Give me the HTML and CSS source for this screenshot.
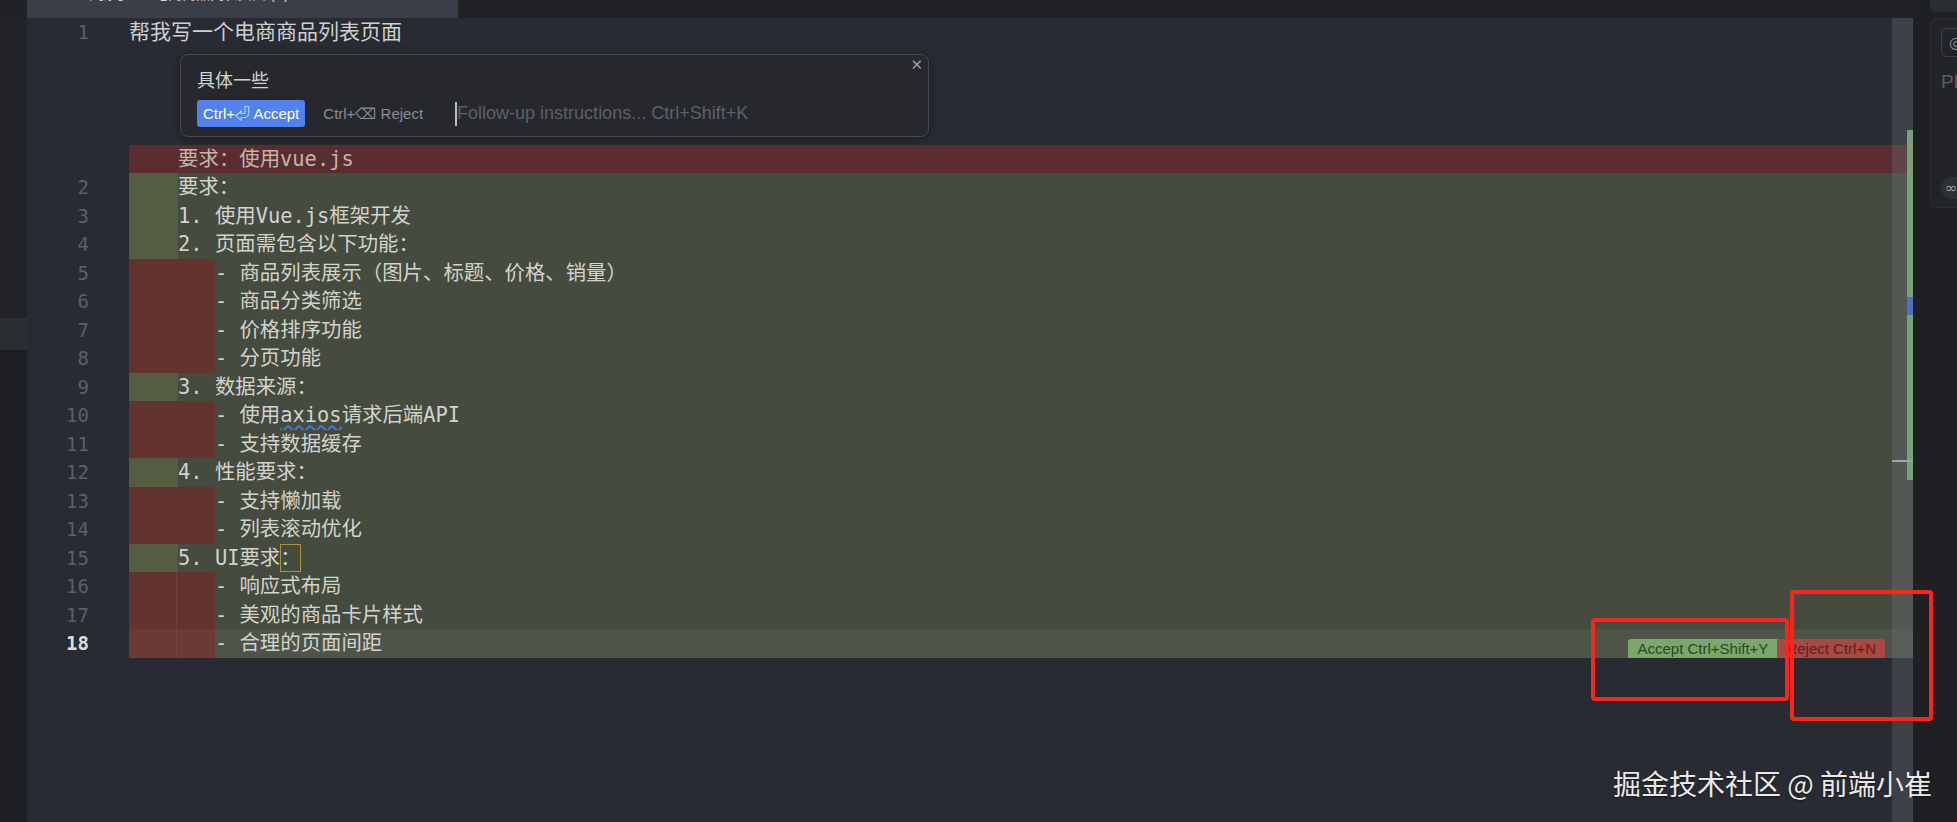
FILE: index.html
```html
<!DOCTYPE html>
<html lang="zh-CN">
<head>
<meta charset="utf-8">
<title>Editor</title>
<link rel="stylesheet" href="styles.css">
</head>
<body>
<div class="app">
  <div class="workbench">
    <div class="tabbar">
      <div class="tab-spacer"></div>
      <div class="tab"><span class="tab-label">⚙  ●  帮我写一个电商商品列表页面 (K)</span></div>
    </div>
    <div class="main">
      <div class="sidebar">
        <div class="sb-top"></div>
        <div class="sb-band"></div>
        <div class="sb-rest"></div>
      </div>
      <div class="editor">
        <div class="row"><div class="ln">1</div><div class="code plain">帮我写一个电商商品列表页面</div></div>
        <div class="zone">
          <div class="cmdk">
            <span class="cmdk-close">✕</span>
            <div class="cmdk-prompt">具体一些</div>
            <div class="cmdk-actions">
              <span class="btn-accept">Ctrl+⏎ Accept</span>
              <span class="btn-reject">Ctrl+⌫ Reject</span>
              <span class="caret"></span>
              <span class="placeholder">Follow-up instructions... Ctrl+Shift+K</span>
            </div>
          </div>
        </div>
        <div class="row"><div class="ln"></div><div class="code del">    要求：使用vue.js</div></div>
        <div class="row"><div class="ln">2</div><div class="code ins"><span class="ind4"></span>要求：</div></div>
        <div class="row"><div class="ln">3</div><div class="code ins"><span class="ind4"></span>1. 使用Vue.js框架开发</div></div>
        <div class="row"><div class="ln">4</div><div class="code ins"><span class="ind4"></span>2. 页面需包含以下功能：</div></div>
        <div class="row"><div class="ln">5</div><div class="code ins"><span class="ind7"></span>- 商品列表展示（图片、标题、价格、销量）</div></div>
        <div class="row"><div class="ln">6</div><div class="code ins"><span class="ind7"></span>- 商品分类筛选</div></div>
        <div class="row"><div class="ln">7</div><div class="code ins"><span class="ind7"></span>- 价格排序功能</div></div>
        <div class="row"><div class="ln">8</div><div class="code ins"><span class="ind7"></span>- 分页功能</div></div>
        <div class="row"><div class="ln">9</div><div class="code ins"><span class="ind4"></span>3. 数据来源：</div></div>
        <div class="row"><div class="ln">10</div><div class="code ins"><span class="ind7"></span>- 使用<span class="squiggle">axios</span>请求后端API</div></div>
        <div class="row"><div class="ln">11</div><div class="code ins"><span class="ind7"></span>- 支持数据缓存</div></div>
        <div class="row"><div class="ln">12</div><div class="code ins"><span class="ind4"></span>4. 性能要求：</div></div>
        <div class="row"><div class="ln">13</div><div class="code ins"><span class="ind7"></span>- 支持懒加载</div></div>
        <div class="row"><div class="ln">14</div><div class="code ins"><span class="ind7"></span>- 列表滚动优化</div></div>
        <div class="row"><div class="ln">15</div><div class="code ins"><span class="ind4"></span>5. UI要求<span class="match">：</span></div></div>
        <div class="row"><div class="ln">16</div><div class="code ins"><span class="ind7 guide"></span>- 响应式布局</div></div>
        <div class="row"><div class="ln">17</div><div class="code ins"><span class="ind7 guide"></span>- 美观的商品卡片样式</div></div>
        <div class="row active"><div class="ln">18</div><div class="code ins"><span class="ind7 guide"></span>- 合理的页面间距<span class="inline-actions"><span class="ia-accept">Accept Ctrl+Shift+Y</span><span class="ia-reject">Reject Ctrl+N</span></span></div></div>

        <div class="scrollbar">
          <span class="mk-green"></span>
          <span class="mk-blue"></span>
          <span class="mk-line"></span>
        </div>
      </div>
    </div>
  </div>
  <div class="rightpanel">
    <div class="rp-top"></div>
    <div class="rp-card">
      <div class="rp-icon">◎</div>
      <div class="rp-text">Plan, search, build anything</div>
      <div class="rp-link">∞</div>
    </div>
  </div>
</div>
<div class="annot a1"></div>
<div class="annot a2"></div>
<div class="watermark">掘金技术社区 @ 前端小崔</div>
</body>
</html>
```

FILE: styles.css
```css
* { box-sizing: border-box; margin: 0; padding: 0; }
html, body { width: 1957px; height: 822px; overflow: hidden; }
body {
  background: #282b31;
  font-family: "Noto Sans", "Noto Sans CJK SC", sans-serif;
  position: relative;
}
.app { display: flex; height: 822px; }
.workbench { width: 1913px; display: flex; flex-direction: column; flex: none; }

.tabbar { height: 18px; display: flex; background: #1f2125; flex: none; }
.tab-spacer { width: 27px; flex: none; }
.tab {
  width: 431px; background: #3a3e48; overflow: hidden;
  display: flex; align-items: flex-end; padding-left: 20px;
}
.tab-label {
  font-family: "Liberation Sans", "Noto Sans CJK SC", sans-serif;
  font-size: 14px; line-height: 18px; margin-bottom: 15px;
  color: #d8d8d8; white-space: pre;
}

.main { flex: 1; display: flex; min-height: 0; }
.sidebar { width: 27px; display: flex; flex-direction: column; flex: none; }
.sb-top { height: 300px; background: #212328; }
.sb-band { height: 32px; background: #2a2d32; }
.sb-rest { flex: 1; background: #1c1e22; }

.editor {
  flex: 1; position: relative; background: #282b31; overflow: hidden;
  font-family: "DejaVu Sans Mono", "Noto Sans CJK SC", monospace;
  font-size: 20.4px; color: #d2d3cc;
}
.row { display: flex; height: 28.5px; line-height: 28.5px; }
.ln { width: 62px; flex: none; text-align: right; color: #59606b; font-size: 19px; }
.code { margin-left: 40px; flex: 1; display: flex; white-space: pre; }
.plain { color: #cfd0d2; font-size: 21px; }
.ins { background: #454b3f; }
.del { background: #5a2e31; color: #c4b3b0; }
.ind4 { width: 4ch; flex: none; background: #555d41; }
.ind7 { width: 7ch; flex: none; background: #63342f; }
.ind7.guide {
  background-image: linear-gradient(90deg, transparent calc(4ch - 2px), rgba(255,255,255,0.07) calc(4ch - 2px), rgba(255,255,255,0.07) calc(4ch - 1px), transparent calc(4ch - 1px));
}
.active .ln { color: #dcdcdc; font-weight: bold; }
.active .code { background: #4f5449; }
.active .ind7 { background-color: #6b3a35; }

.squiggle {
  text-decoration: underline wavy #3b7de8;
  text-decoration-thickness: 1.5px;
  text-underline-offset: 3px;
}
.match { box-shadow: inset 0 0 0 1px #a8953a; }

.inline-actions {
  margin-left: auto; margin-right: 28px; align-self: flex-end;
  display: flex; height: 19px;
  font-family: "Liberation Sans", Arial, sans-serif; font-size: 15px; line-height: 19px;
}
.ia-accept { background: #7ba66c; color: #2a4626; padding: 0 9px; border-radius: 3px 0 0 0; }
.ia-reject { background: #a84944; color: #5e201d; padding: 0 9px; border-radius: 0 3px 0 0; }

.zone { height: 98px; padding: 7.5px 0 0 153px; }
.cmdk {
  position: relative; width: 749px; height: 83px;
  background: #26282d; border: 1px solid #474a51; border-radius: 8px;
  padding: 12px 0 0 16px;
  font-family: "Liberation Sans", "Noto Sans CJK SC", sans-serif;
  box-shadow: 0 2px 8px rgba(0,0,0,0.35);
}
.cmdk-close {
  position: absolute; top: 1px; right: 5px;
  font-family: "DejaVu Sans", sans-serif; font-size: 15px; color: #9b9ea4; line-height: 18px;
}
.cmdk-prompt { font-size: 18px; line-height: 24px; color: #d2d2d2; font-family: "Noto Sans CJK SC", sans-serif; }
.cmdk-actions { margin-top: 9px; display: flex; align-items: center; height: 27px; font-size: 15px; white-space: pre; }
.btn-accept { background: #5181ef; color: #ffffff; height: 27px; line-height: 27px; padding: 0 6px; border-radius: 3px; }
.btn-reject { margin-left: 18px; color: #8a8d93; }
.caret { margin-left: 32px; width: 2px; height: 24px; background: #bdbdbd; }
.placeholder { color: #5c6068; font-size: 18px; }

.scrollbar {
  position: absolute; right: 0; top: 0; bottom: 0; width: 21px;
  background: rgba(112, 118, 128, 0.3);
}
.mk-green { position: absolute; right: 0; top: 112px; width: 6px; height: 350px; background: #7a9f7b; }
.mk-blue { position: absolute; right: 0; top: 279px; width: 6px; height: 18px; background: #4b72c2; }
.mk-line { position: absolute; left: 0; right: 0; top: 442px; height: 2px; background: #a0a6ad; }

.rightpanel {
  width: 44px; flex: none; background: #1e2024; overflow: hidden;
  display: flex; flex-direction: column; padding-left: 17px;
}
.rp-top { height: 12px; flex: none; width: 60px; background: #2a2d33; border-radius: 0 0 0 6px; }
.rp-card {
  margin-top: 6px; height: 190px; width: 60px; flex: none;
  background: #222429; border: 1px solid #2b2e34; border-right: none;
  border-radius: 8px 0 0 8px; padding: 9px 0 0 10px;
  display: flex; flex-direction: column;
}
.rp-icon {
  width: 30px; height: 29px; flex: none;
  border: 1px solid #3b3e45; border-radius: 6px;
  color: #8a8d93; font-size: 16px; line-height: 27px; text-align: center;
  font-family: "DejaVu Sans", sans-serif;
}
.rp-text {
  margin-top: 14px; font-size: 19px; line-height: 22px; color: #5b5f66; white-space: nowrap;
  font-family: "Liberation Sans", sans-serif;
}
.rp-link {
  margin-top: auto; margin-bottom: 8px; height: 22px; width: 40px;
  background: #2c2f34; border-radius: 11px 0 0 11px;
  color: #9a9da3; font-size: 15px; line-height: 22px; padding-left: 4px;
  font-family: "DejaVu Sans", sans-serif;
}

.annot { position: absolute; border: 4px solid #ff2419; border-radius: 4px; }
.a1 { left: 1591px; top: 618px; width: 198px; height: 83px; }
.a2 { left: 1790px; top: 590px; width: 143px; height: 131px; }
.watermark {
  position: absolute; right: 25px; top: 766px;
  font-family: "Noto Sans CJK SC", sans-serif; font-size: 28px; line-height: 34px;
  color: #e9e9e9; text-shadow: 0 1px 2px rgba(0,0,0,0.5); white-space: nowrap;
}
```
